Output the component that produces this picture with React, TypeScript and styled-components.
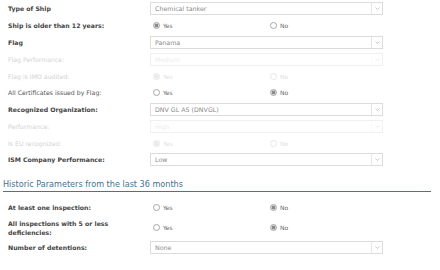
import React from "react";
import styled, { createGlobalStyle } from "styled-components";

const Global = createGlobalStyle`
  html, body { margin: 0; padding: 0; background: #fff; }
  body { font-family: "DejaVu Sans", Verdana, sans-serif; }
`;

const Page = styled.div`
  width: 440px;
  padding-top: 0.6px;
`;

const Row = styled.div<{ $h?: number }>`
  display: grid;
  grid-template-columns: 142px 233px;
  align-items: center;
  height: ${(p) => p.$h ?? 16.78}px;
  padding-left: 8px;
`;

const Label = styled.div<{ $kind: "bold" | "normal" | "disabled" }>`
  font-size: 6.2px;
  line-height: 9px;
  font-weight: ${(p) => (p.$kind === "bold" ? 700 : 400)};
  color: ${(p) =>
    p.$kind === "bold" ? "#444" : p.$kind === "normal" ? "#555" : "#d2d2d2"};
`;

const SelectBox = styled.div<{ $disabled?: boolean }>`
  display: flex;
  align-items: stretch;
  height: 13px;
  box-sizing: border-box;
  border: 1px solid ${(p) => (p.$disabled ? "#f0f0f0" : "#dcdcdc")};
  background: #fff;
`;

const SelectText = styled.div<{ $disabled?: boolean }>`
  flex: 1;
  padding-left: 4px;
  font-size: 6.3px;
  line-height: 11px;
  color: ${(p) => (p.$disabled ? "#ededed" : "#8a8a8a")};
`;

const Chevron = styled.div<{ $disabled?: boolean }>`
  width: 10px;
  border-left: 1px solid ${(p) => (p.$disabled ? "#f4f4f4" : "#e6e6e6")};
  display: flex;
  align-items: center;
  justify-content: center;
  opacity: ${(p) => (p.$disabled ? 0.35 : 1)};
`;

const Radios = styled.div`
  display: grid;
  grid-template-columns: 117px 100px;
  padding-left: 3px;
`;

const RadioItem = styled.div<{ $disabled?: boolean }>`
  display: flex;
  align-items: center;
  gap: 3px;
  font-size: 6px;
  color: ${(p) => (p.$disabled ? "#e0e0e0" : "#666")};
`;

const Circle = styled.span<{ $checked?: boolean; $disabled?: boolean }>`
  width: 7px;
  height: 7px;
  box-sizing: border-box;
  border-radius: 50%;
  border: 1px solid ${(p) => (p.$disabled ? "#e6e6e6" : "#a6a6a6")};
  background: ${(p) =>
    p.$checked
      ? p.$disabled
        ? "radial-gradient(circle, #e8e8e8 0 1.6px, #f6f6f6 2px)"
        : "radial-gradient(circle, #8a8a8a 0 1.6px, #d8d8d8 2px)"
      : "#fff"};
`;

const Heading = styled.div`
  margin: 11px 9px 0 3px;
  padding-bottom: 1px;
  border-bottom: 1px solid #4c7686;
  font-size: 8.1px;
  line-height: 11px;
  color: #3e7490;
`;

const Section = styled.div`
  padding-top: 7px;
`;

const ChevronIcon = () => (
  <svg width="5" height="3" viewBox="0 0 5 3">
    <path d="M0.5 0.5 L2.5 2.5 L4.5 0.5" fill="none" stroke="#b4b4b4" strokeWidth="0.7" />
  </svg>
);

const Select = ({ value, disabled }: { value: string; disabled?: boolean }) => (
  <SelectBox $disabled={disabled}>
    <SelectText $disabled={disabled}>{value}</SelectText>
    <Chevron $disabled={disabled}>
      <ChevronIcon />
    </Chevron>
  </SelectBox>
);

const RadioPair = ({ yes, disabled }: { yes: boolean; disabled?: boolean }) => (
  <Radios>
    <RadioItem $disabled={disabled}>
      <Circle $checked={yes} $disabled={disabled} />
      Yes
    </RadioItem>
    <RadioItem $disabled={disabled}>
      <Circle $checked={!yes} $disabled={disabled} />
      No
    </RadioItem>
  </Radios>
);

export default function App() {
  return (
    <Page>
      <Global />
      <Row>
        <Label $kind="bold">Type of Ship</Label>
        <Select value="Chemical tanker" />
      </Row>
      <Row>
        <Label $kind="bold">Ship is older than 12 years:</Label>
        <RadioPair yes={true} />
      </Row>
      <Row>
        <Label $kind="bold">Flag</Label>
        <Select value="Panama" />
      </Row>
      <Row>
        <Label $kind="disabled">Flag Performance:</Label>
        <Select value="Medium" disabled />
      </Row>
      <Row>
        <Label $kind="disabled">Flag is IMO audited:</Label>
        <RadioPair yes={true} disabled />
      </Row>
      <Row>
        <Label $kind="normal">All Certificates issued by Flag:</Label>
        <RadioPair yes={false} />
      </Row>
      <Row>
        <Label $kind="bold">Recognized Organization:</Label>
        <Select value="DNV GL AS (DNVGL)" />
      </Row>
      <Row>
        <Label $kind="disabled">Performance:</Label>
        <Select value="High" disabled />
      </Row>
      <Row>
        <Label $kind="disabled">Is EU recognized:</Label>
        <RadioPair yes={true} disabled />
      </Row>
      <Row>
        <Label $kind="bold">ISM Company Performance:</Label>
        <Select value="Low" />
      </Row>
      <Heading>Historic Parameters from the last 36 months</Heading>
      <Section>
        <Row>
          <Label $kind="bold">At least one inspection:</Label>
          <RadioPair yes={false} />
        </Row>
        <Row $h={23}>
          <Label $kind="bold">
            All inspections with 5 or less
            <br />
            deficiencies:
          </Label>
          <RadioPair yes={false} />
        </Row>
        <Row>
          <Label $kind="bold">Number of detentions:</Label>
          <Select value="None" />
        </Row>
      </Section>
    </Page>
  );
}
